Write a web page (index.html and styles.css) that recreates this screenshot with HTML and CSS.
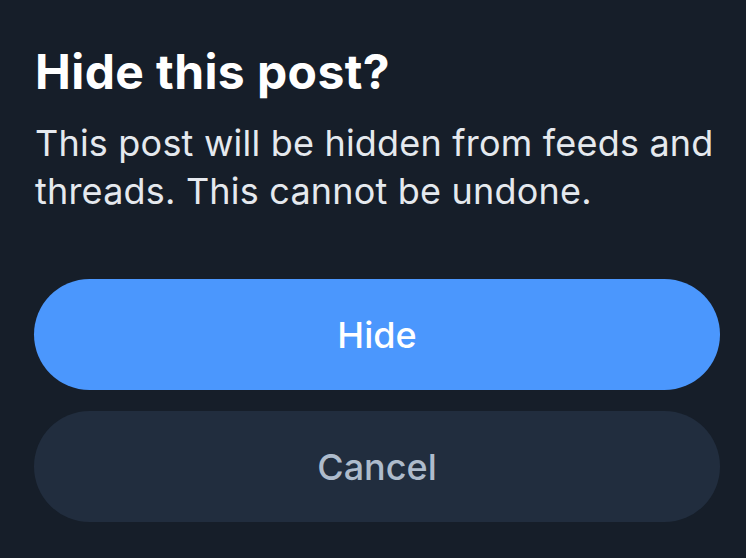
FILE: index.html
```html
<!DOCTYPE html>
<html>
<head>
<meta charset="utf-8">
<link rel="stylesheet" href="styles.css">
</head>
<body>
<div class="dialog">
  <h1 class="title">Hide this post?</h1>
  <p class="desc">This post will be hidden from feeds and threads. This cannot be undone.</p>
  <div class="actions">
    <button class="btn btn-primary">Hide</button>
    <button class="btn btn-secondary">Cancel</button>
  </div>
</div>
</body>
</html>
```
FILE: styles.css
```css
html, body {
  margin: 0;
  padding: 0;
  background: #161e29;
  width: 746px;
  height: 558px;
  overflow: hidden;
}
.dialog {
  padding: 43px 20px 0 35px;
  font-family: Inter, "Noto Sans", sans-serif;
  display: flex;
  flex-direction: column;
}
.title {
  margin: 0;
  font-size: 48px;
  font-weight: 700;
  color: #ffffff;
  line-height: 58px;
  letter-spacing: 0.4px;
}
.desc {
  margin: 18px 0 0 0;
  font-size: 36px;
  line-height: 48px;
  color: #e5e9ee;
  font-weight: 400;
  letter-spacing: 0.2px;
}
.actions {
  margin-top: 64px;
  margin-left: -1px;
  margin-right: 6px;
  display: flex;
  flex-direction: column;
  gap: 21px;
}
.btn {
  height: 111px;
  border: none;
  border-radius: 56px;
  font-family: Inter, "Noto Sans", sans-serif;
  font-size: 36px;
  font-weight: 500;
  display: flex;
  align-items: center;
  justify-content: center;
  padding: 0;
}
.btn-primary {
  background: #4b97fd;
  color: #ffffff;
}
.btn-secondary {
  background: #212d3e;
  color: #aebbcc;
}
```
